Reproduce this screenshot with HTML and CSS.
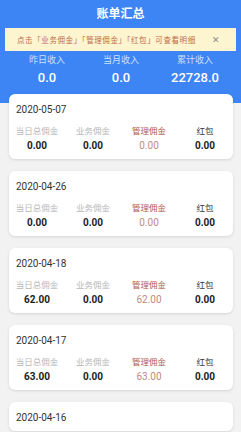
FILE: index.html
```html
<!DOCTYPE html>
<html lang="zh-CN">
<head>
    <meta charset="UTF-8">
    <meta name="viewport" content="width=device-width, initial-scale=1.0">
    <title>账单汇总</title>
    <link rel="stylesheet" href="styles.css">
</head>
<body>

<div class="header">
    <div class="title">账单汇总</div>
    <div class="notice">
        <span>点击「业务佣金」「管理佣金」「红包」可查看明细</span>
        <span class="close">✕</span>
    </div>
    <div class="stats">
        <div class="stat">
            <div class="stat-label">昨日收入</div>
            <div class="stat-value">0.0</div>
        </div>
        <div class="stat">
            <div class="stat-label">当月收入</div>
            <div class="stat-value">0.0</div>
        </div>
        <div class="stat">
            <div class="stat-label">累计收入</div>
            <div class="stat-value">22728.0</div>
        </div>
    </div>
</div>

<div class="list">
    <div class="card">
        <div class="date">2020-05-07</div>
        <div class="cols">
            <div class="col"><div class="lbl">当日总佣金</div><div class="val">0.00</div></div>
            <div class="col"><div class="lbl">业务佣金</div><div class="val">0.00</div></div>
            <div class="col manage"><div class="lbl">管理佣金</div><div class="val">0.00</div></div>
            <div class="col bonus"><div class="lbl">红包</div><div class="val">0.00</div></div>
        </div>
    </div>
    <div class="card">
        <div class="date">2020-04-26</div>
        <div class="cols">
            <div class="col"><div class="lbl">当日总佣金</div><div class="val">0.00</div></div>
            <div class="col"><div class="lbl">业务佣金</div><div class="val">0.00</div></div>
            <div class="col manage"><div class="lbl">管理佣金</div><div class="val">0.00</div></div>
            <div class="col bonus"><div class="lbl">红包</div><div class="val">0.00</div></div>
        </div>
    </div>
    <div class="card">
        <div class="date">2020-04-18</div>
        <div class="cols">
            <div class="col"><div class="lbl">当日总佣金</div><div class="val">62.00</div></div>
            <div class="col"><div class="lbl">业务佣金</div><div class="val">0.00</div></div>
            <div class="col manage"><div class="lbl">管理佣金</div><div class="val">62.00</div></div>
            <div class="col bonus"><div class="lbl">红包</div><div class="val">0.00</div></div>
        </div>
    </div>
    <div class="card">
        <div class="date">2020-04-17</div>
        <div class="cols">
            <div class="col"><div class="lbl">当日总佣金</div><div class="val">63.00</div></div>
            <div class="col"><div class="lbl">业务佣金</div><div class="val">0.00</div></div>
            <div class="col manage"><div class="lbl">管理佣金</div><div class="val">63.00</div></div>
            <div class="col bonus"><div class="lbl">红包</div><div class="val">0.00</div></div>
        </div>
    </div>
    <div class="card">
        <div class="date">2020-04-16</div>
    </div>
</div>

</body>
</html>
```

FILE: styles.css
```css
body { margin: 0; background: #f2f2f2; font-family: Roboto, "Noto Sans CJK SC", sans-serif; overflow: hidden; }

.header { background: #3d85f4; padding-bottom: 16px; color: #fff; }
.title { height: 27px; line-height: 28px; text-align: center; font-size: 12px; font-weight: 700; }
.notice { margin: 1px 5px 0; height: 23px; display: flex; align-items: center; justify-content: space-between; padding: 0 16px 0 12px; background: #fdf5cf; color: #c0694a; font-size: 7.5px; letter-spacing: 0.6px; }
.notice .close { color: #8a8a8a; font-size: 9px; letter-spacing: 0; }

.stats { display: flex; padding: 2px 9px 0 10px; }
.stat { flex: 1; text-align: center; }
.stat-label { font-size: 9px; line-height: 14px; color: rgba(255, 255, 255, 0.75); }
.stat-value { font-size: 13px; line-height: 18px; margin-top: 2px; font-weight: 500; }

.list { margin-top: -9px; padding: 0 8px 0 9px; }
.card { background: #fff; border-radius: 6px; padding: 9px 0 6px; margin-bottom: 12px; box-shadow: 0 1px 3px rgba(0, 0, 0, 0.12); }
.date { padding-left: 7px; font-size: 10px; line-height: 14px; color: #333; }
.cols { display: flex; margin-top: 8px; }
.col { flex: 1; text-align: center; }
.lbl { font-size: 8.5px; line-height: 12px; color: #b8b8b8; }
.val { font-size: 10px; line-height: 14px; margin-top: 2px; font-weight: 700; color: #222; }
.manage .lbl { color: #b25a4e; }
.manage .val { color: #c48a7e; font-weight: 400; }
.bonus .lbl { color: #333; }
```
